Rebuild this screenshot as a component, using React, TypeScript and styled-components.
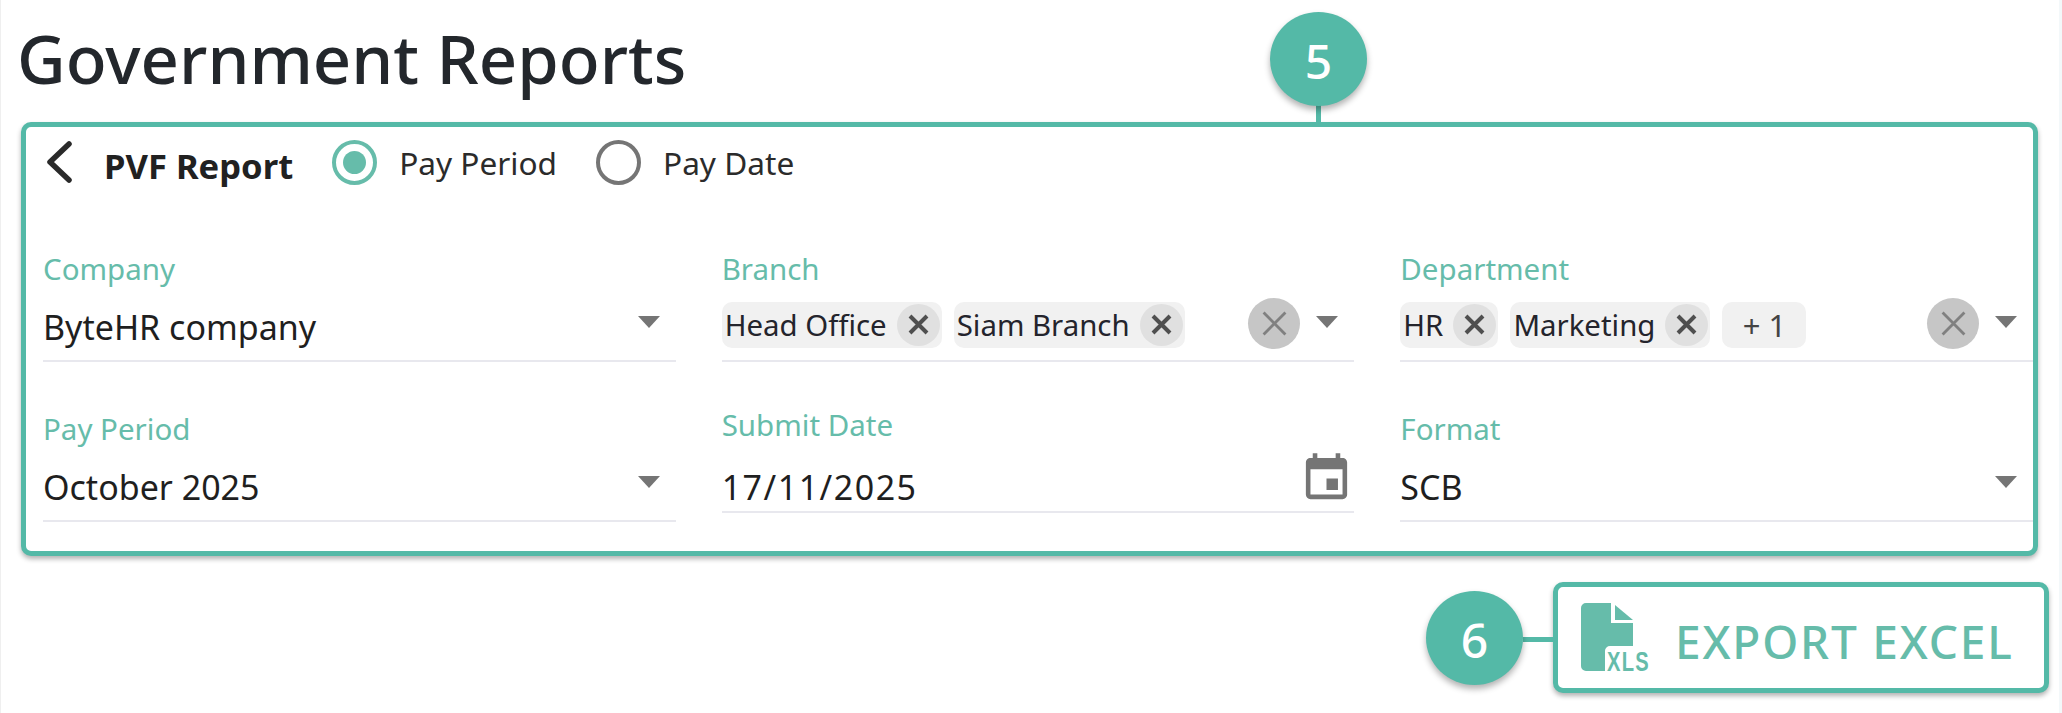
import styled, { createGlobalStyle } from 'styled-components';
import { MdEvent } from 'react-icons/md';

const TEAL = '#54b9a7';
const SOFT_TEAL = '#66bcaa';

const GlobalStyle = createGlobalStyle`
  html, body {
    margin: 0;
    padding: 0;
    background: #fff;
  }
  body {
    font-family: 'Noto Sans', 'Open Sans', sans-serif;
    color: #212121;
  }
`;

const Page = styled.div`
  position: relative;
  width: 2062px;
  height: 713px;
  box-sizing: border-box;
  padding: 0 10px 0 20px;
  border-left: 1px solid #efefef;
  border-right: 3px solid #f3f8fa;
  display: flex;
  flex-direction: column;
  overflow: hidden;
`;

const Title = styled.h1`
  margin: 0 0 0 -4px;
  height: 122px;
  font-size: 67px;
  line-height: 116px;
  font-weight: 500;
  color: #23272c;
  white-space: nowrap;
`;

const Panel = styled.section`
  box-sizing: border-box;
  height: 434px;
  margin-right: 11px;
  border: 5px solid ${TEAL};
  border-radius: 10px;
  box-shadow: 0 3px 5px rgba(0, 0, 0, 0.3);
  background: #fff;
  display: flex;
  flex-direction: column;
`;

const Header = styled.div`
  height: 70px;
  padding-left: 20px;
  display: flex;
  align-items: center;
`;

const BackIcon = styled.svg`
  width: 26px;
  height: 42px;
  margin-right: 32px;
  fill: none;
  stroke: #2a2a2a;
  stroke-width: 5.5;
  stroke-linecap: round;
  stroke-linejoin: round;
`;

const ReportName = styled.span`
  font-size: 34.6px;
  font-weight: 700;
  margin-right: 39px;
  margin-top: 6px;
`;

const RadioOption = styled.label`
  display: flex;
  align-items: center;
  gap: 22px;
  font-size: 31.6px;
  margin-right: 39px;
  color: #2b2b2b;
`;

const RadioCircle = styled.span<{ $checked?: boolean }>`
  box-sizing: border-box;
  width: 45px;
  height: 45px;
  border-radius: 50%;
  border: 4px solid ${(p) => (p.$checked ? SOFT_TEAL : '#757575')};
  display: flex;
  align-items: center;
  justify-content: center;

  &::after {
    content: '';
    width: 23px;
    height: 23px;
    border-radius: 50%;
    background: ${(p) => (p.$checked ? SOFT_TEAL : 'transparent')};
  }
`;

const FieldGrid = styled.div`
  margin-top: 52px;
  padding-left: 17px;
  display: grid;
  grid-template-columns: repeat(3, 1fr);
  column-gap: 46px;
  row-gap: 47px;
`;

const Field = styled.div<{ $raised?: boolean }>`
  display: flex;
  flex-direction: column;
  margin-top: ${(p) => (p.$raised ? '-4px' : '0')};
`;

const FieldLabel = styled.div`
  height: 40px;
  line-height: 40px;
  font-size: 29.5px;
  color: ${SOFT_TEAL};
`;

const ValueRow = styled.div<{ $short?: boolean }>`
  box-sizing: border-box;
  height: ${(p) => (p.$short ? '68px' : '73px')};
  border-bottom: 2px solid #e8e8ee;
  display: flex;
  align-items: center;
  padding-right: ${(p) => (p.$short ? '0' : '16px')};
`;

const ValueText = styled.span<{ $short?: boolean }>`
  font-size: 34px;
  color: #1f1f1f;
  letter-spacing: ${(p) => (p.$short ? '1.5px' : '0')};
  margin-top: ${(p) => (p.$short ? '17px' : '4px')};
`;

const Arrow = styled.span`
  margin-left: auto;
  margin-bottom: 6px;
  width: 0;
  height: 0;
  border-left: 11px solid transparent;
  border-right: 11px solid transparent;
  border-top: 12px solid #757575;
`;

const ClearButton = styled.span`
  margin-left: auto;
  margin-right: 16px;
  margin-bottom: 2px;
  width: 52px;
  height: 51px;
  border-radius: 50%;
  background: #c6c6c6;
  display: flex;
  align-items: center;
  justify-content: center;
`;

const ClearArrow = styled(Arrow)`
  margin-left: 0;
`;

const CalendarIcon = styled(MdEvent)`
  margin-left: auto;
  font-size: 55px;
  color: #757575;
`;

const Chip = styled.span`
  height: 46px;
  box-sizing: border-box;
  padding: 0 2px 0 3px;
  margin-right: 12px;
  border-radius: 10px;
  background: #f1f1f1;
  display: flex;
  align-items: center;
  gap: 10px;
  font-size: 29.4px;
  color: #24242c;
`;

const CountChip = styled(Chip)`
  width: 84px;
  justify-content: center;
  padding: 0;
  font-size: 31px;
  color: #444;
`;

const ChipDelete = styled.span`
  width: 43px;
  height: 42px;
  border-radius: 50%;
  background: #e0e0e0;
  display: flex;
  align-items: center;
  justify-content: center;
`;

const CrossIcon = styled.svg<{ $thin?: boolean }>`
  width: ${(p) => (p.$thin ? '27px' : '21px')};
  height: ${(p) => (p.$thin ? '27px' : '21px')};
  fill: none;
  stroke: ${(p) => (p.$thin ? '#808080' : '#4f4f4f')};
`;

const ExportRow = styled.div`
  margin-top: 26px;
  display: flex;
  justify-content: flex-end;
`;

const ExportButton = styled.button`
  box-sizing: border-box;
  width: 496px;
  height: 111px;
  padding: 6px 0 0 23px;
  border: 5px solid ${TEAL};
  border-radius: 10px;
  background: #fff;
  box-shadow: 0 3px 5px rgba(0, 0, 0, 0.3);
  display: flex;
  align-items: center;
  gap: 24px;
  font-family: inherit;
  font-size: 46px;
  font-weight: 500;
  letter-spacing: 1.8px;
  color: ${SOFT_TEAL};
`;

const XlsIcon = styled.svg`
  width: 70px;
  height: 69px;
  flex: none;
  margin-top: -6px;
`;

const XlsLabel = styled.text`
  font-family: 'Liberation Sans', sans-serif;
  font-size: 28px;
  font-weight: 700;
  fill: ${SOFT_TEAL};
`;

// numbered callouts laid over the screenshot
const Callout = styled.div<{ $x: number; $y: number }>`
  position: absolute;
  left: ${(p) => p.$x}px;
  top: ${(p) => p.$y}px;
  box-sizing: border-box;
  width: 97px;
  height: 94px;
  padding-top: 3px;
  border-radius: 50%;
  background: ${TEAL};
  box-shadow: 0 4px 6px rgba(0, 0, 0, 0.3);
  color: #fff;
  font-size: 48px;
  font-weight: 500;
  display: flex;
  align-items: center;
  justify-content: center;
`;

const VerticalLink = styled.div`
  position: absolute;
  left: 1315px;
  top: 105px;
  width: 5px;
  height: 18px;
  background: ${TEAL};
`;

const HorizontalLink = styled.div`
  position: absolute;
  left: 1522px;
  top: 637px;
  width: 31px;
  height: 5px;
  background: ${TEAL};
`;

const Cross = ({ thin }: { thin?: boolean }) => (
  <CrossIcon $thin={thin} viewBox="0 0 21 21">
    <path d="M2 2 L19 19 M19 2 L2 19" strokeWidth={thin ? 2.2 : 4} />
  </CrossIcon>
);

const TagChip = ({ label }: { label: string }) => (
  <Chip>
    {label}
    <ChipDelete>
      <Cross />
    </ChipDelete>
  </Chip>
);

export default function App() {
  return (
    <>
      <GlobalStyle />
      <Page>
        <Title>Government Reports</Title>
        <Panel>
          <Header>
            <BackIcon viewBox="0 0 26 42">
              <path d="M23 3 L4 21 L23 39" />
            </BackIcon>
            <ReportName>PVF Report</ReportName>
            <RadioOption>
              <RadioCircle $checked />
              Pay Period
            </RadioOption>
            <RadioOption>
              <RadioCircle />
              Pay Date
            </RadioOption>
          </Header>
          <FieldGrid>
            <Field>
              <FieldLabel>Company</FieldLabel>
              <ValueRow>
                <ValueText>ByteHR company</ValueText>
                <Arrow />
              </ValueRow>
            </Field>
            <Field>
              <FieldLabel>Branch</FieldLabel>
              <ValueRow>
                <TagChip label="Head Office" />
                <TagChip label="Siam Branch" />
                <ClearButton>
                  <Cross thin />
                </ClearButton>
                <ClearArrow />
              </ValueRow>
            </Field>
            <Field>
              <FieldLabel>Department</FieldLabel>
              <ValueRow>
                <TagChip label="HR" />
                <TagChip label="Marketing" />
                <CountChip>+ 1</CountChip>
                <ClearButton>
                  <Cross thin />
                </ClearButton>
                <ClearArrow />
              </ValueRow>
            </Field>
            <Field>
              <FieldLabel>Pay Period</FieldLabel>
              <ValueRow>
                <ValueText>October 2025</ValueText>
                <Arrow />
              </ValueRow>
            </Field>
            <Field $raised>
              <FieldLabel>Submit Date</FieldLabel>
              <ValueRow $short>
                <ValueText $short>17/11/2025</ValueText>
                <CalendarIcon />
              </ValueRow>
            </Field>
            <Field>
              <FieldLabel>Format</FieldLabel>
              <ValueRow>
                <ValueText>SCB</ValueText>
                <Arrow />
              </ValueRow>
            </Field>
          </FieldGrid>
        </Panel>
        <ExportRow>
          <ExportButton>
            <XlsIcon viewBox="0 0 70 69">
              <path
                d="M5 0H30V20H52V43H29a5 5 0 0 0-5 5V68H5a5 5 0 0 1-5-5V5a5 5 0 0 1 5-5Z"
                fill={SOFT_TEAL}
              />
              <path d="M34 2L52 17H34Z" fill={SOFT_TEAL} />
              <XlsLabel x="26" y="68" textLength="43" lengthAdjust="spacingAndGlyphs">
                XLS
              </XlsLabel>
            </XlsIcon>
            EXPORT EXCEL
          </ExportButton>
        </ExportRow>
        <VerticalLink />
        <Callout $x={1269} $y={12}>5</Callout>
        <HorizontalLink />
        <Callout $x={1425} $y={591}>6</Callout>
      </Page>
    </>
  );
}
